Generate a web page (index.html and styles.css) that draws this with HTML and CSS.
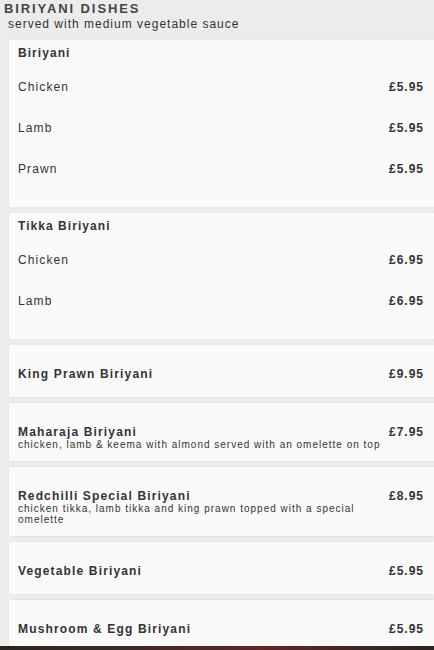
FILE: index.html
```html
<!DOCTYPE html>
<html lang="en">
<head>
    <meta charset="UTF-8">
    <meta name="viewport" content="width=device-width, initial-scale=1.0">
    <title>Biriyani Dishes</title>
    <link rel="stylesheet" href="styles.css">
</head>
<body>
    <h1 class="section-title">BIRIYANI DISHES</h1>
    <p class="section-note">served with medium vegetable sauce</p>

    <div class="card group">
        <h2 class="group-title">Biriyani</h2>
        <div class="row"><span>Chicken</span><span class="price">£5.95</span></div>
        <div class="row"><span>Lamb</span><span class="price">£5.95</span></div>
        <div class="row"><span>Prawn</span><span class="price">£5.95</span></div>
    </div>

    <div class="card group">
        <h2 class="group-title">Tikka Biriyani</h2>
        <div class="row"><span>Chicken</span><span class="price">£6.95</span></div>
        <div class="row"><span>Lamb</span><span class="price">£6.95</span></div>
    </div>

    <div class="card single">
        <div class="dish">
            <div class="dish-name">King Prawn Biriyani</div>
        </div>
        <span class="price">£9.95</span>
    </div>

    <div class="card single">
        <div class="dish">
            <div class="dish-name">Maharaja Biriyani</div>
            <div class="dish-desc">chicken, lamb &amp; keema with almond served with an omelette on top</div>
        </div>
        <span class="price">£7.95</span>
    </div>

    <div class="card single">
        <div class="dish">
            <div class="dish-name">Redchilli Special Biriyani</div>
            <div class="dish-desc">chicken tikka, lamb tikka and king prawn topped with a special omelette</div>
        </div>
        <span class="price">£8.95</span>
    </div>

    <div class="card single">
        <div class="dish">
            <div class="dish-name">Vegetable Biriyani</div>
        </div>
        <span class="price">£5.95</span>
    </div>

    <div class="card single">
        <div class="dish">
            <div class="dish-name">Mushroom &amp; Egg Biriyani</div>
        </div>
        <span class="price">£5.95</span>
    </div>

    <div class="bottom-bar"></div>
</body>
</html>
```

FILE: styles.css
```css
body {
    margin: 0;
    background-color: #ececec;
    font-family: "Liberation Sans", Arial, sans-serif;
    color: #333;
}
.section-title {
    margin: 0;
    padding: 1px 0 0 4px;
    font-size: 13px;
    line-height: 15px;
    font-weight: bold;
    letter-spacing: 1.9px;
    color: #444;
}
.section-note {
    margin: 1px 0 0 8px;
    font-size: 12px;
    line-height: 14px;
    letter-spacing: 1px;
    color: #333;
}
.card {
    background-color: #fafafa;
    margin: 9px 0 6px 9px;
    box-shadow: 0 0 2px rgba(0, 0, 0, 0.06);
}
.card + .card {
    margin-top: 0;
}
.group {
    padding: 6px 10px 24px 9px;
}
.group-title {
    margin: 0;
    font-size: 12px;
    line-height: 14px;
    font-weight: bold;
    letter-spacing: 1.05px;
}
.row {
    display: flex;
    justify-content: space-between;
    padding: 20px 0 7px;
    font-size: 12px;
    line-height: 14px;
    letter-spacing: 1.1px;
}
.price {
    font-size: 12px;
    line-height: 14px;
    font-weight: bold;
    letter-spacing: 1px;
}
.single {
    display: flex;
    justify-content: space-between;
    align-items: flex-start;
    gap: 8px;
    padding: 22px 10px 11px 9px;
}
.dish {
    flex: 1;
    min-height: 19px;
}
.dish-name {
    font-size: 12px;
    line-height: 14px;
    font-weight: bold;
    letter-spacing: 1.15px;
}
.dish-desc {
    font-size: 10px;
    line-height: 11px;
    letter-spacing: 1px;
}
.bottom-bar {
    position: fixed;
    left: 0;
    right: 0;
    bottom: 0;
    height: 4px;
    background: linear-gradient(to right, #2b2622, #4a2a24 45%, #5b2b22 60%, #2a2420);
}
```
